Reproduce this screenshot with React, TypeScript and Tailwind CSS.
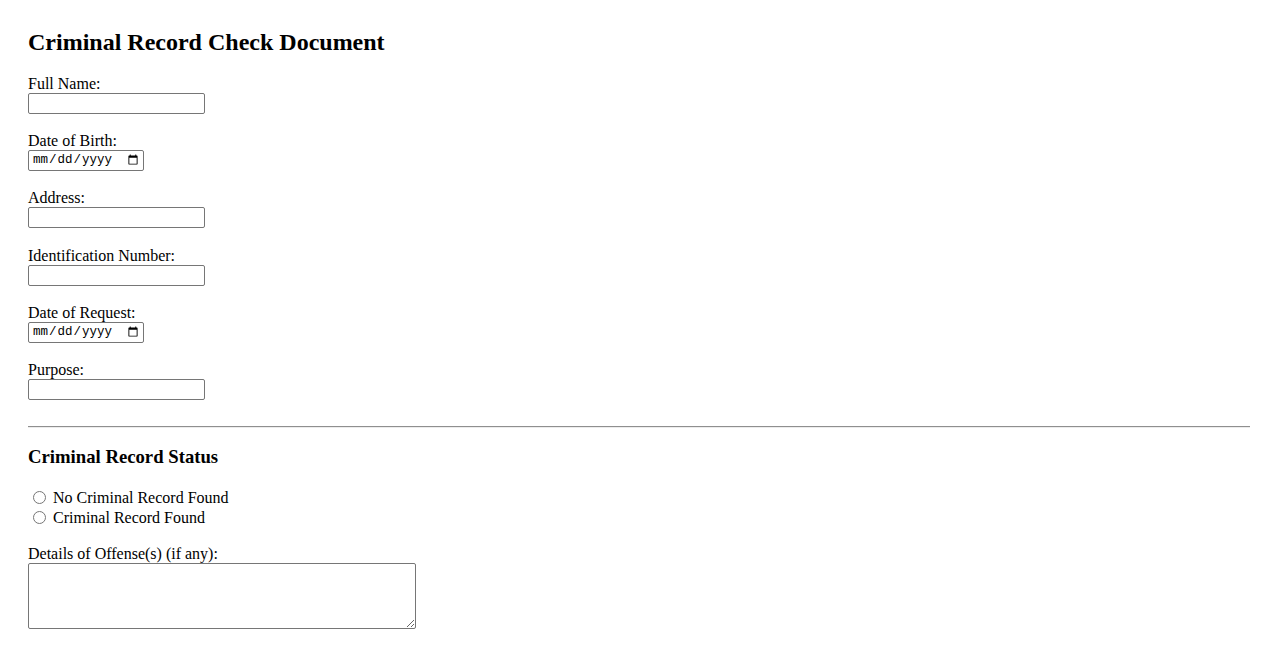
import React from "react";

const textInput =
  "block w-[177px] h-[21px] border border-[#767676] rounded-[2px] bg-white px-[2px] text-[13px] font-['Liberation_Sans',sans-serif]";
const dateInput =
  "block w-[116px] h-[21px] border border-[#767676] rounded-[2px] bg-white pl-[3px] pr-[2px] text-[12.5px] text-black font-['Liberation_Mono',monospace]";

function Field({ label, type = "text" }: { label: string; type?: "text" | "date" }) {
  return (
    <div className="mb-[18.2px]">
      <label className="block leading-[18px]">{label}</label>
      <input type={type} className={type === "date" ? dateInput : textInput} />
    </div>
  );
}

export default function App() {
  return (
    <div className="min-h-[650px] bg-white px-[28px] pt-[28px] pb-[20px] text-black text-[16px] font-['Liberation_Serif',serif]">
      <h2 className="text-[24px] font-bold leading-[28px] mb-[19px]">Criminal Record Check Document</h2>

      <form>
        <Field label="Full Name:" />
        <Field label="Date of Birth:" type="date" />
        <Field label="Address:" />
        <Field label="Identification Number:" />
        <Field label="Date of Request:" type="date" />
        <Field label="Purpose:" />

        <hr className="mt-[26px] h-0 border-t border-b border-t-[#8f8f8f] border-b-[#ececec]" />

        <h3 className="mt-[18px] text-[18.72px] font-bold leading-[22px]">Criminal Record Status</h3>

        <div className="mt-[20px]">
          <label className="flex items-center h-[20px]">
            <input type="radio" name="status" className="ml-[5px] mr-[7px] w-[13px] h-[13px]" />
            No Criminal Record Found
          </label>
          <label className="flex items-center h-[20px]">
            <input type="radio" name="status" className="ml-[5px] mr-[7px] w-[13px] h-[13px]" />
            Criminal Record Found
          </label>
        </div>

        <div className="mt-[17px]">
          <label className="block leading-[18px]">Details of Offense(s) (if any):</label>
          <textarea className="block w-[388px] h-[66px] border border-[#767676] rounded-[2px] bg-white p-[2px] text-[13px]" />
        </div>
      </form>
    </div>
  );
}
